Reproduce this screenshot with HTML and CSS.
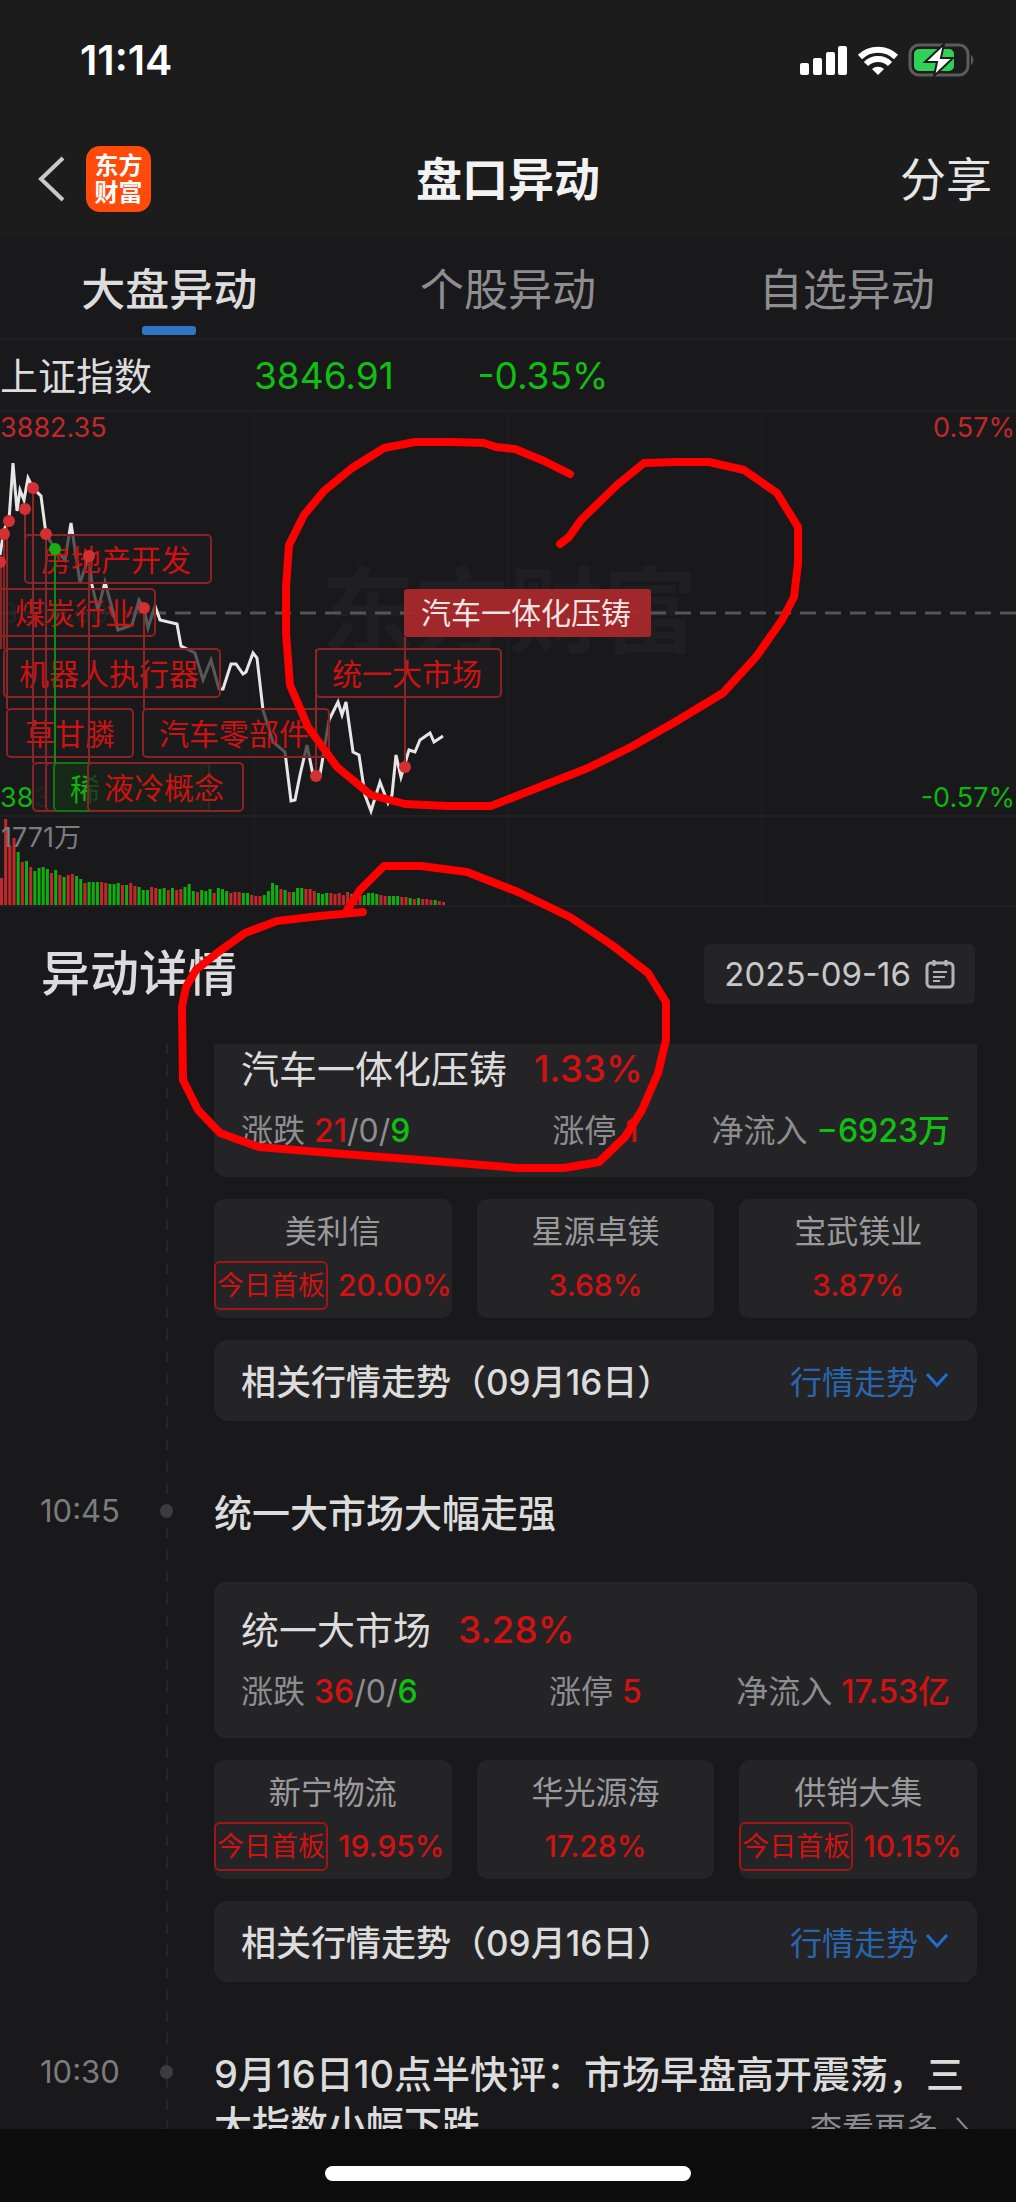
FILE: index.html
```html
<!DOCTYPE html>
<html lang="zh-CN">
<head>
  <meta charset="UTF-8">
  <meta name="viewport" content="width=device-width, initial-scale=1.0">
  <title>盘口异动</title>
  <link rel="stylesheet" href="styles.css">
</head>
<body>
<div class="app">
  <header class="top">
    <div class="status">
      <span class="clock">11:14</span>
      <svg class="status-icons" width="176" height="34" viewBox="0 0 176 34">
        <g fill="#fff">
          <rect x="0" y="20" width="9" height="12" rx="2"/>
          <rect x="13" y="15" width="9" height="17" rx="2"/>
          <rect x="26" y="9" width="9" height="23" rx="2"/>
          <rect x="38" y="3" width="9" height="29" rx="2"/>
          <path d="M78 32l-6-6a9 9 0 0 1 12 0z"/>
        </g>
        <path d="M60 14a26 26 0 0 1 36 0M66 21a17 17 0 0 1 24 0" fill="none" stroke="#fff" stroke-width="6"/>
        <rect x="110" y="2" width="58" height="30" rx="9" fill="none" stroke="#5c5c5e" stroke-width="3"/>
        <path d="M171 12q5 5 0 10z" fill="#5c5c5e"/>
        <rect x="114" y="6" width="40" height="22" rx="5" fill="#30d158"/>
        <path d="M144 1l-19 18h12l-3 14 19-18h-12z" fill="#fff" stroke="#1c1c1c" stroke-width="2"/>
      </svg>
    </div>
    <div class="nav">
      <div class="nav-left">
        <button class="back" aria-label="返回">
          <svg width="28" height="48" viewBox="0 0 28 48"><path d="M25 3L3 24l22 21" fill="none" stroke="#c8c8c8" stroke-width="4"/></svg>
        </button>
        <span class="logo">东方<br>财富</span>
      </div>
      <h1>盘口异动</h1>
      <button class="share">分享</button>
    </div>
  </header>

  <nav class="tabs">
    <a href="#" class="active">大盘异动</a>
    <a href="#">个股异动</a>
    <a href="#">自选异动</a>
  </nav>

  <div class="index-row">
    <span class="index-name">上证指数</span>
    <span>3846.91</span>
    <span>-0.35%</span>
  </div>

  <svg class="chart" viewBox="0 410 1016 498">
    <text class="watermark" x="321" y="646">东方财富</text>
    <path class="grid" d="M0 411H1016M0 816H1016M0 906H1016"/>
    <path class="grid faint" d="M254 411V906M508 411V906M762 411V906"/>
    <path class="middle" d="M0 613H1016"/>
    <text class="scale dim" x="1" y="623">3860.50</text>
    <text class="scale up" x="0" y="437">3882.35</text>
    <text class="scale up" x="1015" y="437" text-anchor="end">0.57%</text>
    <text class="scale down" x="1015" y="807" text-anchor="end">-0.57%</text>
    <text class="scale down" x="0" y="807">38<tspan class="dim">3</tspan></text>

    <polyline class="price" points="0,555 4,530 9,520 13,463 17,511 20,490 24,500 28,478 33,488 41,496 46,534 55,549 65,560 71,523 80,583 89,556 92,585 98,610 105,582 118,630 132,625 139,600 144,608 148,628 155,606 160,620 177,624 181,646 195,653 203,680 211,660 219,689 223,689 231,664 236,664 243,674 246,672 253,653 257,658 263,710 273,742 285,752 291,801 295,800 300,775 307,745 313,775 320,775 329,720 338,702 342,715 346,702 353,752 359,755 365,795 371,811 380,782 388,803 392,795 396,755 401,777 409,750 415,752 420,740 430,733 434,742 443,736"/>

    <g class="tag">
      <rect x="25" y="535" width="186" height="48" rx="4"/>
      <rect x="-4" y="589" width="159" height="47" rx="4"/>
      <rect x="4" y="649" width="216" height="48" rx="4"/>
      <rect x="316" y="649" width="185" height="48" rx="4"/>
      <rect x="7" y="709" width="126" height="48" rx="4"/>
      <rect x="143" y="709" width="186" height="48" rx="4"/>
      <rect x="33" y="763" width="156" height="48" rx="4"/>
      <rect x="46" y="763" width="156" height="48" rx="4"/>
      <rect class="green" x="54" y="763" width="155" height="48" rx="4"/>
      <text class="green" x="70" y="800">稀</text>
      <rect x="88" y="763" width="155" height="48" rx="4"/>
      <text x="41" y="571">房地产开发</text>
      <text x="15" y="624">煤炭行业</text>
      <text x="19" y="685">机器人执行器</text>
      <text x="332" y="685">统一大市场</text>
      <text x="25" y="745">草甘膦</text>
      <text x="159" y="745">汽车零部件</text>
      <text x="104" y="799">液冷概念</text>
    </g>
    <path class="drop" d="M1 562V649M4 534V649M7 521V709M25 509V540M33 488V763M46 534V763M89 556V763M144 608V709M316 776V649M405 767V637"/>
    <path class="drop green" d="M55 549V763"/>
    <g class="tag solid">
      <rect x="404" y="589" width="247" height="48" rx="3"/>
      <text x="421" y="624">汽车一体化压铸</text>
    </g>
    <g class="dots">
      <circle cx="0" cy="562" r="6"/><circle cx="4" cy="534" r="6"/><circle cx="9" cy="521" r="6"/>
      <circle cx="25" cy="509" r="6"/><circle cx="33" cy="488" r="6"/><circle cx="46" cy="534" r="6"/>
      <circle class="green" cx="55" cy="549" r="6"/>
      <circle cx="89" cy="556" r="6"/><circle cx="144" cy="608" r="6"/>
      <circle cx="316" cy="776" r="6"/><circle cx="405" cy="767" r="6"/>
    </g>
    <g id="volume"></g>
    <text class="volume-text" x="1" y="847">1771万</text>
  </svg>

  <div class="detail-head">
    <h2>异动详情</h2>
    <button class="date">2025-09-16
      <svg width="30" height="30" viewBox="0 0 30 30" fill="none" stroke="#b4b4b6" stroke-width="3">
        <rect x="2" y="4" width="26" height="24" rx="4"/><path d="M9 1v6M21 1v6"/><path stroke-width="2" d="M8 13h14M8 18h12M8 22h7"/>
      </svg>
    </button>
  </div>

  <main class="feed">
    <div class="timeline">
      <section class="item">
        <div class="card">
          <div class="card-title">汽车一体化压铸 <b class="up">1.33%</b></div>
          <div class="stats">
            <span>涨跌 <b class="up">21</b>/0/<b class="down">9</b></span>
            <span>涨停 <b class="up">1</b></span>
            <span>净流入 <b class="down">−6923万</b></span>
          </div>
        </div>
        <div class="stocks">
          <div class="stock"><span>美利信</span><div class="change first-limit"><em>今日首板</em><b>20.00%</b></div></div>
          <div class="stock"><span>星源卓镁</span><div class="change"><b>3.68%</b></div></div>
          <div class="stock"><span>宝武镁业</span><div class="change"><b>3.87%</b></div></div>
        </div>
        <div class="related">
          <span>相关行情走势（09月16日）</span>
          <a href="#">行情走势<svg width="24" height="16" viewBox="0 0 24 16"><path d="M2 2l10 11L22 2" fill="none" stroke="#1d6fd0" stroke-width="3"/></svg></a>
        </div>
      </section>

      <section class="item">
        <time>10:45</time>
        <h3>统一大市场大幅走强</h3>
        <div class="card">
          <div class="card-title">统一大市场 <b class="up">3.28%</b></div>
          <div class="stats">
            <span>涨跌 <b class="up">36</b>/0/<b class="down">6</b></span>
            <span>涨停 <b class="up">5</b></span>
            <span>净流入 <b class="up">17.53亿</b></span>
          </div>
        </div>
        <div class="stocks">
          <div class="stock"><span>新宁物流</span><div class="change first-limit"><em>今日首板</em><b>19.95%</b></div></div>
          <div class="stock"><span>华光源海</span><div class="change"><b>17.28%</b></div></div>
          <div class="stock"><span>供销大集</span><div class="change first-limit"><em>今日首板</em><b>10.15%</b></div></div>
        </div>
        <div class="related">
          <span>相关行情走势（09月16日）</span>
          <a href="#">行情走势<svg width="24" height="16" viewBox="0 0 24 16"><path d="M2 2l10 11L22 2" fill="none" stroke="#1d6fd0" stroke-width="3"/></svg></a>
        </div>
      </section>

      <section class="item">
        <time>10:30</time>
        <h3>9月16日10点半快评：市场早盘高开震荡，三大指数小幅下跌</h3>
        <a href="#" class="more">查看更多<svg width="16" height="28" viewBox="0 0 16 28"><path d="M3 3l10 11L3 25" fill="none" stroke="#8c8c8e" stroke-width="2"/></svg></a>
      </section>
    </div>
  </main>

  <footer class="home"><div class="home-bar"></div></footer>

  <!-- hand-drawn marks -->
  <svg class="marks" viewBox="0 0 1016 2202">
    <polyline points="570,474 544,461 515,449 496,447 484,443 453,442 415,442 384,448 352,468 324,491 304,515 289,545 286,587 286,633 290,685 308,727 337,767 371,795 405,804 448,806 491,806 588,768 631,747 675,722 723,693 756,657 782,620 794,597 798,563 798,527 777,493 744,470 709,462 675,462 644,463 617,485 581,520 569,537 560,544"/>
    <polyline points="363,912 320,916 277,921 245,933 217,953 196,970 186,987 182,1007 183,1080 198,1110 220,1133 259,1147 356,1155 421,1160 518,1168 564,1168 599,1162 625,1137 642,1110 658,1073 666,1040 666,1002 648,973 612,945 570,917 518,892 467,872 421,866 384,866 360,890 347,910"/>
  </svg>
</div>

<script>
// volume per minute: r = up, g = down
const volume = '27r 86r 60r 67r 53g 43r 44g 38r 34g 37g 38g 36g 32r 35g 30r 28g 30r 31r 29g 26g 22r 23g 23g 23g 23r 22r 21g 21g 22g 20r 20g 22r 19r 18g 15g 15g 18r 17r 16g 17g 15r 17g 15r 16r 18g 21g 14g 13r 15g 14g 16g 12r 17g 16g 14g 12r 13r 13r 12g 12g 10r 9r 9r 10g 14g 22g 20g 16r 15g 13r 13g 17g 17g 16r 16r 14r 12g 11g 12g 12r 11r 12r 10r 13r 11g 10r 9r 10g 12g 12g 11g 10r 9r 9g 9g 9g 8r 8r 7g 6r 7g 6r 6r 5r 5g 4r 3r'.split(' ');
const svgNS = 'http://www.w3.org/2000/svg';
volume.forEach((item, i) => {
  const h = parseInt(item);
  const bar = document.createElementNS(svgNS, 'rect');
  bar.setAttribute('x', i * 4.17);
  bar.setAttribute('y', 905 - h);
  bar.setAttribute('width', 3);
  bar.setAttribute('height', h);
  bar.setAttribute('fill', item.endsWith('r') ? '#c3282b' : '#0fae0f');
  document.getElementById('volume').appendChild(bar);
});
</script>
</body>
</html>
```
FILE: styles.css
```css
* { box-sizing: border-box; }
body {
  margin: 0;
  background-color: #19191b;
  color: #dcdcdc;
  font-family: Inter, "Noto Sans CJK SC", sans-serif;
}
h1, h2, h3 { margin: 0; font-weight: 500; }
b { font-weight: 500; }
a { text-decoration: none; color: inherit; }
button { border: none; background: none; padding: 0; font-family: inherit; color: inherit; }
svg { display: block; }
.up { color: #d01212; }
.down { color: #10c010; }

.app {
  position: relative;
  display: flex;
  flex-direction: column;
  height: 100vh;
  overflow: hidden;
}

/* header */
.top { background-color: #1c1c1c; flex: none; }
.status {
  display: flex;
  justify-content: space-between;
  align-items: center;
  height: 120px;
  padding: 0 40px 0 80px;
}
.clock { font-size: 41px; font-weight: 600; color: #fff; }
.nav {
  display: grid;
  grid-template-columns: 1fr auto 1fr;
  align-items: center;
  height: 118px;
  padding: 0 24px;
}
.nav-left { display: flex; align-items: center; gap: 20px; padding-left: 14px; }
.logo {
  width: 65px;
  height: 66px;
  padding-top: 6px;
  border-radius: 14px;
  background-color: #ff4a0a;
  color: #fff;
  font-size: 24px;
  line-height: 27px;
  font-weight: 700;
  text-align: center;
}
.nav h1 { font-size: 46px; line-height: 60px; font-weight: 600; color: #f2f2f2; }
.share { justify-self: end; font-size: 46px; line-height: 60px; color: #e6e6e6; }

.tabs {
  display: flex;
  flex: none;
  height: 102px;
  border-bottom: 2px solid #202022;
}
.tabs a {
  position: relative;
  flex: 1;
  text-align: center;
  font-size: 44px;
  line-height: 104px;
  color: #8e8e90;
}
.tabs .active { color: #dcdcdc; font-weight: 500; }
.tabs .active::after {
  content: "";
  position: absolute;
  left: calc(50% - 27px);
  bottom: 3px;
  width: 54px;
  height: 9px;
  border-radius: 3px;
  background-color: #3274c4;
}

.index-row {
  display: grid;
  grid-template-columns: 25% 22% 1fr;
  flex: none;
  height: 70px;
  font-size: 37px;
  line-height: 72px;
  color: #10c010;
}
.index-name { font-size: 38px; color: #dcdcdc; }

/* chart */
.chart { width: 100%; height: auto; flex: none; }
.watermark { font-size: 94px; font-weight: 700; fill: #1f1f21; }
.grid { stroke: #202023; stroke-width: 2; }
.grid.faint { stroke: #1d1d20; }
.middle { stroke: #555557; stroke-width: 3; stroke-dasharray: 16 9; }
.scale { font-size: 27px; }
.scale.up { fill: #c0282b; }
.scale.down { fill: #10b410; }
.scale.dim, .scale .dim { fill: #343437; }
.price { fill: none; stroke: #e6e6e6; stroke-width: 3; }
.tag rect { fill: #1c1b1d; fill-opacity: 0.7; stroke: #8a2326; stroke-width: 2; }
.tag text { font-size: 30px; fill: #cc1212; }
.tag rect.green { stroke: #12731a; fill: #123014; }
.tag text.green { fill: #0fb40f; }
.tag.solid rect { fill: #a8282b; fill-opacity: 0.95; stroke: none; }
.tag.solid text { fill: #f4e4e4; }
.drop { stroke: #8a2528; stroke-width: 2; }
.drop.green { stroke: #0f8a14; }
.dots circle { fill: #d23033; }
.dots .green { fill: #14b014; }
.volume-text { font-size: 27px; fill: #7c7c80; }

/* details */
.detail-head {
  display: flex;
  flex: none;
  justify-content: space-between;
  align-items: center;
  height: 136px;
  padding: 0 41px 4px;
}
.detail-head h2 { font-size: 49px; line-height: 60px; }
.date {
  display: flex;
  align-items: center;
  gap: 14px;
  height: 60px;
  padding: 0 20px;
  border-radius: 6px;
  background-color: #242426;
  font-size: 33px;
  color: #c8c8ca;
}
.feed { flex: 1; min-height: 0; overflow: hidden; }
/* list is scrolled a little under the heading */
.timeline {
  margin-top: -23px;
  background: repeating-linear-gradient(#262628 0 11px, transparent 11px 22px) 166px 0 / 2px 100% no-repeat;
}
.item {
  position: relative;
  padding: 0 39px 67px 214px;
}
.item time {
  position: absolute;
  left: 40px;
  top: 0;
  font-size: 31px;
  line-height: 46px;
  color: #7c7c7e;
}
.item time::after {
  content: "";
  position: absolute;
  left: 120px;
  top: 16px;
  width: 13px;
  height: 14px;
  border-radius: 50%;
  background-color: #3c3c3e;
}
.item h3 { font-size: 38px; line-height: 50px; }
.item h3 + .card { margin-top: 44px; }
.card {
  height: 156px;
  padding: 24px 27px;
  border-radius: 12px;
  background-color: #242426;
}
.card-title {
  display: flex;
  gap: 27px;
  font-size: 38px;
  line-height: 48px;
}
.card-title b { font-size: 37px; }
.stats {
  display: grid;
  grid-template-columns: 1fr auto 1fr;
  margin-top: 18px;
  font-size: 32px;
  line-height: 40px;
  color: #8e8e90;
}
.stats span:last-child { text-align: right; }
.stocks {
  display: grid;
  grid-template-columns: repeat(3, minmax(0, 1fr));
  gap: 25px;
  margin: 22px 0;
}
.stock {
  height: 119px;
  padding-top: 12px;
  border-radius: 10px;
  background-color: #242426;
  text-align: center;
  font-size: 32px;
  line-height: 42px;
  color: #9a9a9c;
}
.change {
  display: flex;
  justify-content: center;
  align-items: center;
  gap: 10px;
  height: 50px;
  margin-top: 7px;
  font-size: 30px;
  color: #d01212;
  white-space: nowrap;
}
.first-limit { justify-content: flex-start; }
.change em {
  padding: 0 1px;
  border: 2px solid #a01616;
  border-radius: 6px;
  font-style: normal;
  font-size: 27px;
  line-height: 45px;
}
.related {
  display: flex;
  justify-content: space-between;
  align-items: center;
  height: 81px;
  padding: 0 28px 2px 27px;
  border-radius: 14px;
  background-color: #242426;
  font-size: 35px;
  font-weight: 500;
}
.related a {
  display: flex;
  align-items: center;
  gap: 7px;
  font-size: 32px;
  font-weight: 400;
  color: #2a66ae;
}
.more {
  position: absolute;
  right: 46px;
  top: 58px;
  display: flex;
  align-items: center;
  gap: 16px;
  font-size: 32px;
  line-height: 44px;
  color: #8c8c8e;
}

.home {
  flex: none;
  height: 73px;
  padding-top: 37px;
  background-color: #0c0c0d;
}
.home-bar {
  width: 36%;
  height: 15px;
  margin: 0 auto;
  border-radius: 8px;
  background-color: #fff;
}
.marks {
  position: absolute;
  top: 0;
  left: 0;
  width: 100%;
  height: auto;
  pointer-events: none;
}
.marks polyline {
  fill: none;
  stroke: #fe0000;
  stroke-width: 8;
  stroke-linecap: round;
  stroke-linejoin: round;
}
```
